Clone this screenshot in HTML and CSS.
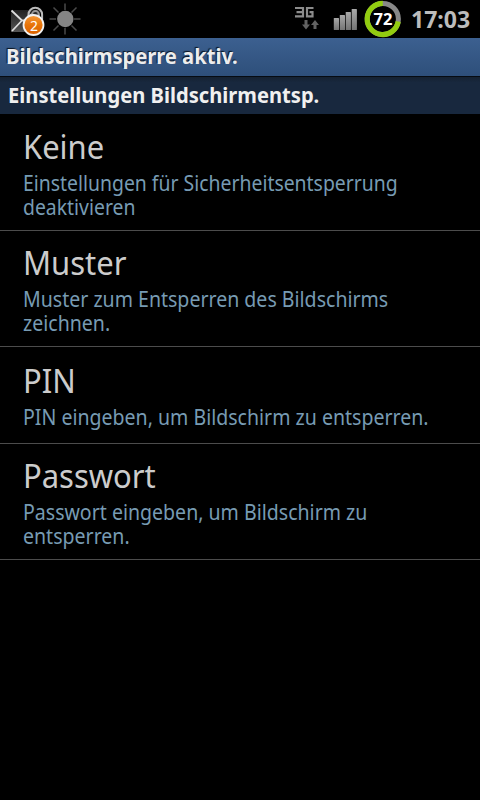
FILE: index.html
```
<!DOCTYPE html>
<html lang="de">
<head>
<meta charset="utf-8">
<title>Bildschirmsperre aktiv.</title>
<link rel="stylesheet" href="styles.css">
</head>
<body>
<header class="status">
  <svg class="mail" width="40" height="38" viewBox="0 0 40 38">
    <defs>
      <linearGradient id="env" x1="0" y1="0" x2="0" y2="1"><stop offset="0" stop-color="#222"/><stop offset="1" stop-color="#555"/></linearGradient>
      <linearGradient id="dot" x1="0" y1="0" x2="0" y2="1"><stop offset="0" stop-color="#f49a3a"/><stop offset=".5" stop-color="#e87408"/><stop offset="1" stop-color="#d95f00"/></linearGradient>
    </defs>
    <rect x="3" y="10" width="29" height="22" fill="url(#env)"/>
    <path d="M3.500 10.500L14 20.500L17 20.500L24 14M4 31L14 20.500" fill="none" stroke="#ddd" stroke-width="1.800"/>
    <path d="M20.500 16V14.500a6.800 6.800 0 0 1 13.600 0v5" fill="none" stroke="#bbb" stroke-width="2"/>
    <path d="M24 16.500v-2a3.400 3.400 0 0 1 6.800 0v2" fill="none" stroke="#999" stroke-width="2"/>
    <circle cx="25.500" cy="25" r="10" fill="url(#dot)" stroke="#f2f2f2" stroke-width="1.800"/>
    <text class="count" x="25.900" y="31" text-anchor="middle">2</text>
  </svg>
  <svg class="sun" width="34" height="38" viewBox="0 0 34 38">
    <path d="M17 3.500v6.500M17 28v6.500M1.500 19h6.500M26 19h6.500M5.500 7.500l5 5M23.500 25.500l5 5M28.500 7.500l-5 5M10.500 25.500l-5 5" stroke="#4a4a4a" stroke-width="1.500"/>
    <circle cx="17.300" cy="19" r="8.200" fill="#858585"/>
  </svg>
  <svg class="net" width="28" height="38" viewBox="0 0 28 38">
    <path d="M0 8h8v8.300H0M1.500 12.200h6M18.500 8H12v8.300h5.500v-4.100h-3" fill="none" stroke="#8c8c8c" stroke-width="2.200"/>
    <path d="M9.500 20h3v4.500H15L11 29.500L7 24.500h2.500z" fill="#626262"/>
    <path d="M18.500 29h3v-4H24L20 20L16 25h2.500z" fill="#626262"/>
  </svg>
  <svg class="signal" width="24" height="38" viewBox="0 0 24 38">
    <defs><linearGradient id="bar" x1="0" y1="0" x2="0" y2="1"><stop offset="0" stop-color="#a8a8a8"/><stop offset="1" stop-color="#747474"/></linearGradient></defs>
    <g fill="url(#bar)"><rect x=".8" y="18" width="5.200" height="12" rx=".5"/><rect x="6.800" y="15" width="5.200" height="15" rx=".5"/><rect x="12.700" y="12" width="5.200" height="18" rx=".5"/><rect x="18.700" y="9" width="5.200" height="21" rx=".5"/></g>
  </svg>
  <svg class="battery" width="38" height="38" viewBox="0 0 38 38">
    <circle cx="18.800" cy="19" r="15.600" fill="none" stroke="#888" stroke-width="5"/>
    <path d="M34.200 21.500A15.600 15.600 0 1 1 18.800 3.400" fill="none" stroke="#92cc10" stroke-width="5.200"/>
    <text class="percent" x="19" y="25" text-anchor="middle">72</text>
  </svg>
  <span class="clock">17:03</span>
</header>
<div class="title"><span>Bildschirmsperre aktiv.</span></div>
<div class="category"><span>Einstellungen Bildschirmentsp.</span></div>
<main>
  <section class="row first"><h2><span>Keine</span></h2><p><span>Einstellungen für Sicherheitsentsperrung<br>deaktivieren</span></p></section>
  <section class="row"><h2><span>Muster</span></h2><p><span>Muster zum Entsperren des Bildschirms<br>zeichnen.</span></p></section>
  <section class="row single"><h2><span>PIN</span></h2><p><span>PIN eingeben, um Bildschirm zu entsperren.</span></p></section>
  <section class="row"><h2><span>Passwort</span></h2><p><span>Passwort eingeben, um Bildschirm zu<br>entsperren.</span></p></section>
</main>
</body>
</html>
```
FILE: styles.css
```
* { box-sizing: border-box; }
body { margin: 0; width: 480px; height: 800px; overflow: hidden; background: #000; font-family: "Noto Sans", "Open Sans", sans-serif; }
span { display: inline-block; transform-origin: 0 50%; white-space: nowrap; }
svg { display: block; flex: none; }
.status { height: 38px; display: flex; padding-left: 8px; }
.net { margin-left: 213px; }
.signal { margin-left: 10px; }
.battery { margin-left: 7px; }
.clock { margin-left: 9px; font-size: 24px; line-height: 38px; font-weight: 700; color: #bcbcbc; transform: scaleX(.96); }
.count { font-size: 14px; fill: #fff; }
.percent { font-size: 16.500px; font-weight: 700; fill: #fff; }
.title { height: 39px; padding-left: 6px; background: linear-gradient(#3c6090, #2e4f7a); border-bottom: 1px solid #060b12; font-size: 21px; line-height: 37px; font-weight: 700; color: #ededed; text-shadow: -1px -1px 1px #0a1420; }
.title span, .category span { transform: scaleX(.959); }
.category { height: 37px; padding-left: 8px; background: linear-gradient(#152131, #18283e 15%); font-size: 21px; line-height: 37px; font-weight: 700; color: #f0f0f0; }
.row { height: 116px; padding: 8px 0 0 23px; border-bottom: 1px solid #4c4c4c; }
.row.first { height: 117px; padding-top: 9px; }
.row.single { height: 97px; padding-top: 10px; }
h2 { margin: 0; height: 48px; font-size: 33px; line-height: 47px; font-weight: 400; color: #ccc; }
h2 span { transform: scaleX(.938); }
p { margin: 0; font-size: 21.500px; line-height: 24px; color: #779bb3; }
p span { transform: scaleX(.909); }
.first p span { transform: scaleX(.902); }
```
